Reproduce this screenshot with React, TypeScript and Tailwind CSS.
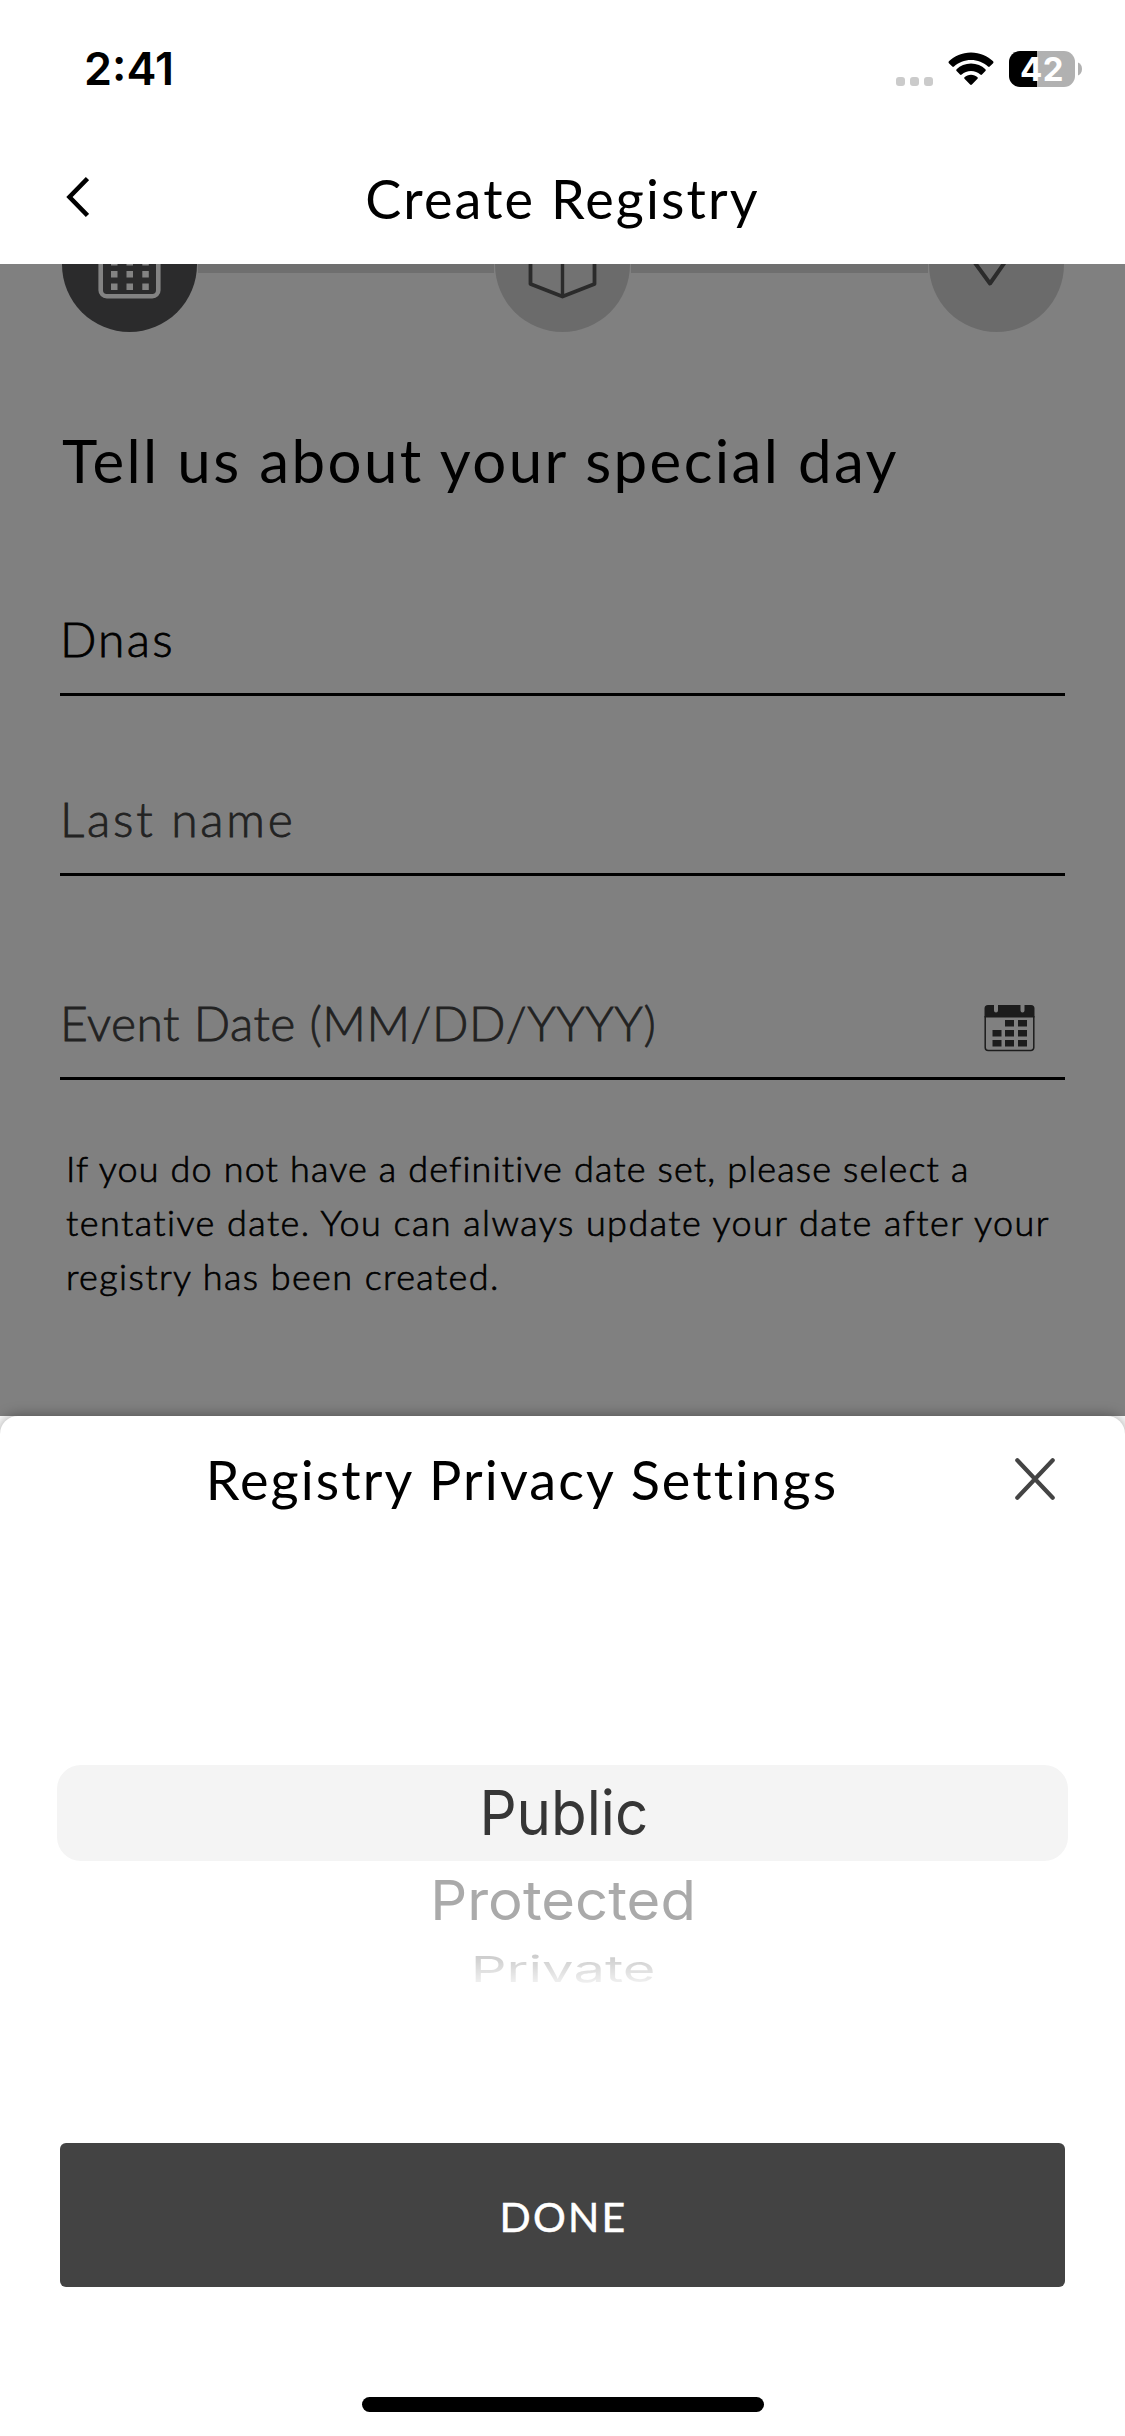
import type { ReactNode } from "react";

function StatusBar() {
  return (
    <div className="flex h-[138px] items-center justify-between pl-[84px] pr-[43px]">
      <span className="font-['Inter',sans-serif] text-[45px] font-semibold leading-[60px] text-black">
        2:41
      </span>
      <div className="flex items-center">
        <div className="mt-6 mr-[15px] flex gap-[5px]">
          <i className="size-[9px] rounded-[3px] bg-[#cbcbcb]" />
          <i className="size-[9px] rounded-[3px] bg-[#cbcbcb]" />
          <i className="size-[9px] rounded-[3px] bg-[#cbcbcb]" />
        </div>
        <svg className="mr-[15px] h-[34px] w-[46px]" viewBox="0 0 46 34">
          <path d="M23 0.5C14 0.5 6.3 4 0.9 9.3Q0 10.3 0.9 11.3L4.3 14.6Q5.1 15.3 6 14.5C10.500 10.400 16.500 8 23 8C29.500 8 35.500 10.400 40 14.500Q40.900 15.300 41.700 14.600L45.100 11.300Q46 10.300 45.100 9.300C39.700 4 32 0.500 23 0.500Z" />
          <path d="M23 11.600C17.300 11.600 12.300 13.800 8.600 17.300Q7.700 18.200 8.600 19.100L12 22.500Q12.800 23.300 13.700 22.500C16.200 20.300 19.400 19 23 19C26.600 19 29.800 20.300 32.300 22.500Q33.200 23.300 34 22.500L37.400 19.100Q38.300 18.200 37.400 17.300C33.700 13.800 28.700 11.600 23 11.600Z" />
          <path d="M23 22.800C20.400 22.800 18.200 23.700 16.500 25.200Q15.700 26 16.500 26.800L22.100 32.500Q23 33.400 23.900 32.500L29.500 26.800Q30.300 26 29.500 25.200C27.800 23.700 25.600 22.800 23 22.800Z" />
        </svg>
        <div className="flex h-9 w-[66px] items-center justify-center rounded-[11px] bg-linear-to-r from-black from-[43%] to-[#b1b1b1] to-[43%] font-['Inter',sans-serif] text-[33px] font-bold leading-9 tracking-[0.5px] text-white">
          42
        </div>
        <svg className="ml-[3px] h-[14px] w-1" viewBox="0 0 4 14">
          <path d="M0 0.500C2.600 1.500 4 4 4 7C4 10 2.600 12.500 0 13.500Z" fill="#b1b1b1" />
        </svg>
      </div>
    </div>
  );
}

function NavBar() {
  return (
    <div className="flex h-[126px] items-center px-[65px] pb-2">
      <svg className="h-[42px] w-6" viewBox="0 0 24 42" fill="none" stroke="#000" strokeWidth="4.600">
        <path d="M22.500 2.500L4.500 21L22.500 39.500" />
      </svg>
      <h1 className="flex-1 pt-[3px] pr-6 text-center text-[54px] font-normal leading-[70px] tracking-[2.100px] text-black">
        Create Registry
      </h1>
    </div>
  );
}

function Step({ active, children }: { active?: boolean; children: ReactNode }) {
  return (
    <div className={active ? "size-[135px] shrink-0 rounded-full bg-[#2b2b2c]" : "size-[135px] shrink-0 rounded-full bg-[#6b6b6b]"}>
      <svg className="size-[135px]" viewBox="0 0 135 135" fill="none">
        {children}
      </svg>
    </div>
  );
}

function Steps() {
  return (
    <div className="flex h-[68px] items-end overflow-hidden pl-[62px] pr-[61px]">
      <Step active>
        <rect x="38.700" y="38" width="57.600" height="61.200" rx="6" stroke="#838383" strokeWidth="4.600" />
        <path d="M49 62.500h6.500v6H49zM64.500 62.500H71v6h-6.500zM80.300 62.500h6.500v6h-6.500zM49 74h6.500v6.500H49zM64.500 74H71v6.500h-6.500zM80.300 74h6.500v6.500h-6.500zM49 86.500h6.500V93H49zM64.500 86.500H71V93h-6.500zM80.300 86.500h6.500V93h-6.500z" fill="#838383" />
      </Step>
      <div className="mx-px h-[9px] w-[296px] self-start bg-[#6f6f6f]" />
      <Step>
        <path d="M35.500 45L67.500 57L99.500 45V87L67.500 99.500L35.500 87Z" fill="#727272" stroke="#2b2b2b" strokeWidth="3.800" strokeLinejoin="round" />
        <path d="M67.500 57V99.500" stroke="#2b2b2b" strokeWidth="3.400" />
      </Step>
      <div className="mx-px h-[9px] flex-1 self-start bg-[#6f6f6f]" />
      <Step>
        <path d="M38 55L61 86.500L83 55" stroke="#2b2b2b" strokeWidth="4" strokeLinejoin="round" />
      </Step>
    </div>
  );
}

function CalendarIcon() {
  return (
    <svg className="h-[50px] w-[51px]" viewBox="0 0 51 50">
      <path d="M4 1H10V6.500a2 2 0 0 0 4 0V1H36.500V6.500a2 2 0 0 0 4 0V1H47a3.500 3.500 0 0 1 3.500 3.500V13.500H0.500V4.500A3.500 3.500 0 0 1 4 1Z" fill="#1c1c1c" />
      <path d="M1.200 12V43.500a3 3 0 0 0 3 3H46.800a3 3 0 0 0 3-3V12" fill="none" stroke="#1c1c1c" strokeWidth="1.500" />
      <path d="M21 16h9v6.500h-9zM34 16h9v6.500h-9zM8.500 26h9v6.500h-9zM21 26h9v6.500h-9zM34 26h9v6.500h-9zM8.500 36h9v6.500h-9zM21 36h9v6.500h-9zM34 36h9v6.500h-9z" fill="#1c1c1c" />
    </svg>
  );
}

const fieldBase =
  "flex h-[87px] items-start justify-between border-b-[3px] border-black text-[48px] font-light leading-[60px]";

export default function App() {
  return (
    <div className="flex h-[2436px] w-[1125px] flex-col overflow-hidden bg-white font-['Lato',sans-serif]">
      <StatusBar />
      <NavBar />

      <main className="h-[1152px] shrink-0 bg-[#808080]">
        <Steps />
        <div className="px-[60px]">
          <h2 className="mt-[88px] pl-[2px] text-[60px] font-normal leading-[80px] tracking-[2.380px] text-black">
            Tell us about your special day
          </h2>
          <div className={`${fieldBase} mt-[109px] tracking-[2.200px] text-black [-webkit-text-stroke:0.800px_#000]`}>
            Dnas
          </div>
          <div className={`${fieldBase} mt-[93px] tracking-[2.750px] text-[#222] [-webkit-text-stroke:0.800px_#222]`}>
            Last name
          </div>
          <div className={`${fieldBase} mt-[117px] pr-[30px] tracking-[0.520px] text-[#222] [-webkit-text-stroke:0.800px_#222]`}>
            <span>Event Date (MM/DD/YYYY)</span>
            <span className="pt-[11px]">
              <CalendarIcon />
            </span>
          </div>
          <p className="mt-[61px] pl-[6px] text-[36px] font-light leading-[54px] whitespace-nowrap text-black [-webkit-text-stroke:0.700px_#000]">
            <span className="tracking-[1.140px]">If you do not have a definitive date set, please select a</span>
            <br />
            <span className="tracking-[1.430px]">tentative date. You can always update your date after your</span>
            <br />
            <span className="tracking-[1.400px]">registry has been created.</span>
          </p>
        </div>
      </main>

      <section className="h-[1020px] shrink-0 rounded-t-[18px] bg-white shadow-[0_0_14px_rgba(0,0,0,0.400)]">
        <div className="flex h-[124px] items-center pl-[60px] pr-[70px]">
          <h2 className="flex-1 pt-[3px] text-center text-[54px] font-normal leading-[70px] tracking-[2.100px] text-black">
            Registry Privacy Settings
          </h2>
          <div className="flex w-[71px] justify-end">
            <svg className="mt-[2px] h-[42px] w-10" viewBox="0 0 40 42" fill="none" stroke="#444" strokeWidth="4.200" strokeLinecap="round">
              <path d="M2.300 2.300L37.700 39.700M37.700 2.300L2.300 39.700" />
            </svg>
          </div>
        </div>

        <div className="mx-[57px] mt-[225px] flex flex-col items-center pl-px font-['Inter',sans-serif] text-[62px] font-normal">
          <div className="-ml-px flex h-24 w-[1011px] items-center justify-center rounded-[24px] bg-[#f4f4f4] pl-[2px] text-[#363636]">
            <span className="scale-x-[0.940] leading-[96px]">Public</span>
          </div>
          <div className="flex h-[78px] items-center text-[#aaa]">
            <span className="scale-x-[0.935] scale-y-[0.880]">Protected</span>
          </div>
          <div className="flex h-[59px] items-center">
            <span className="scale-x-[0.905] scale-y-[0.580] bg-linear-to-b from-[#cccccc] from-25% to-[#f6f6f6] to-85% bg-clip-text text-transparent">
              Private
            </span>
          </div>
        </div>

        <button className="mx-[60px] mt-[145px] flex h-36 w-[1005px] items-center justify-center rounded-[6px] bg-[#434343] pt-[3px] pl-[2px] text-[41px] font-normal leading-[60px] tracking-[2.200px] text-white [-webkit-text-stroke:0.500px_#fff]">
          DONE
        </button>
        <div className="mx-auto mt-[110px] h-[15px] w-[402px] rounded-full bg-black" />
      </section>
    </div>
  );
}
